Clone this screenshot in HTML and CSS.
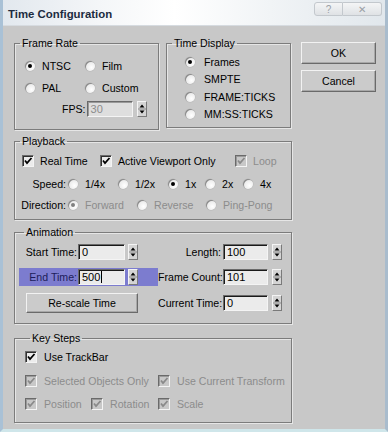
FILE: index.html
```html
<!DOCTYPE html>
<html>
<head>
<meta charset="utf-8">
<link rel="stylesheet" href="styles.css">
</head>
<body>
<div class="window">
  <div class="titlebar">
    <span class="title">Time Configuration</span>
    <div class="caption-btns">
      <span class="cbtn help">?</span>
      <span class="cbtn close">✕</span>
    </div>
  </div>
  <div class="content">
    <div class="toprow">
      <fieldset class="group fr">
        <legend>Frame Rate</legend>
        <div class="fr-grid">
          <span class="opt"><span class="radio on"></span>NTSC</span>
          <span class="opt"><span class="radio"></span>Film</span>
          <span class="opt"><span class="radio"></span>PAL</span>
          <span class="opt"><span class="radio"></span>Custom</span>
        </div>
        <div class="fps-row">
          <span class="lbl">FPS:</span>
          <span class="field disabled w46">30</span>
          <span class="spin"><svg width="8" height="14" viewBox="0 0 8 14"><path d="M4 2.5 L6.5 5.5 L1.5 5.5 Z" fill="#000"/><path d="M0 7 H8" stroke="#8a8a8a" stroke-width="1"/><path d="M1.5 8.5 L6.5 8.5 L4 11.5 Z" fill="#000"/></svg></span>
        </div>
      </fieldset>
      <fieldset class="group td">
        <legend>Time Display</legend>
        <div class="td-list">
          <span class="opt"><span class="radio on"></span>Frames</span>
          <span class="opt"><span class="radio"></span>SMPTE</span>
          <span class="opt"><span class="radio"></span>FRAME:TICKS</span>
          <span class="opt"><span class="radio"></span>MM:SS:TICKS</span>
        </div>
      </fieldset>
      <div class="btn-col">
        <span class="btn dlg">OK</span>
        <span class="btn dlg">Cancel</span>
      </div>
    </div>

    <fieldset class="group wide pb">
      <legend>Playback</legend>
      <div class="row pb-r1">
        <span class="opt c-rt"><span class="check on"><svg width="10" height="10" viewBox="0 0 10 10"><path d="M2 4.5 L4 7 L8.5 2" fill="none" stroke="#000" stroke-width="1.8"/></svg></span>Real Time</span>
        <span class="opt c-av"><span class="check on"><svg width="10" height="10" viewBox="0 0 10 10"><path d="M2 4.5 L4 7 L8.5 2" fill="none" stroke="#000" stroke-width="1.8"/></svg></span>Active Viewport Only</span>
        <span class="opt dis"><span class="check on dis"><svg width="10" height="10" viewBox="0 0 10 10"><path d="M2 4.5 L4 7 L8.5 2" fill="none" stroke="#8a8a8a" stroke-width="1.8"/></svg></span>Loop</span>
      </div>
      <div class="row pb-r2">
        <span class="rlbl">Speed:</span>
        <span class="opt s1"><span class="radio"></span>1/4x</span>
        <span class="opt s1"><span class="radio"></span>1/2x</span>
        <span class="opt s2"><span class="radio on"></span>1x</span>
        <span class="opt s3"><span class="radio"></span>2x</span>
        <span class="opt"><span class="radio"></span>4x</span>
      </div>
      <div class="row pb-r3">
        <span class="rlbl">Direction:</span>
        <span class="opt dis d1"><span class="radio on dis"></span>Forward</span>
        <span class="opt dis d1"><span class="radio"></span>Reverse</span>
        <span class="opt dis"><span class="radio"></span>Ping-Pong</span>
      </div>
    </fieldset>

    <fieldset class="group wide an">
      <legend>Animation</legend>
      <div class="an-grid">
        <div class="cell left">
          <span class="flbl">Start Time:</span>
          <span class="field w47">0</span>
          <span class="spin"><svg width="8" height="14" viewBox="0 0 8 14"><path d="M4 2.5 L6.5 5.5 L1.5 5.5 Z" fill="#000"/><path d="M0 7 H8" stroke="#8a8a8a" stroke-width="1"/><path d="M1.5 8.5 L6.5 8.5 L4 11.5 Z" fill="#000"/></svg></span>
        </div>
        <div class="cell right">
          <span class="flbl">Length:</span>
          <span class="field w45">100</span>
          <span class="spin"><svg width="8" height="14" viewBox="0 0 8 14"><path d="M4 2.5 L6.5 5.5 L1.5 5.5 Z" fill="#000"/><path d="M0 7 H8" stroke="#8a8a8a" stroke-width="1"/><path d="M1.5 8.5 L6.5 8.5 L4 11.5 Z" fill="#000"/></svg></span>
        </div>
        <div class="cell left hl">
          <span class="flbl">End Time:</span>
          <span class="field w47">500<span class="caret"></span></span>
          <span class="spin"><svg width="8" height="14" viewBox="0 0 8 14"><path d="M4 2.5 L6.5 5.5 L1.5 5.5 Z" fill="#000"/><path d="M0 7 H8" stroke="#8a8a8a" stroke-width="1"/><path d="M1.5 8.5 L6.5 8.5 L4 11.5 Z" fill="#000"/></svg></span>
        </div>
        <div class="cell right">
          <span class="flbl">Frame Count:</span>
          <span class="field w45">101</span>
          <span class="spin"><svg width="8" height="14" viewBox="0 0 8 14"><path d="M4 2.5 L6.5 5.5 L1.5 5.5 Z" fill="#000"/><path d="M0 7 H8" stroke="#8a8a8a" stroke-width="1"/><path d="M1.5 8.5 L6.5 8.5 L4 11.5 Z" fill="#000"/></svg></span>
        </div>
        <div class="cell left">
          <span class="btn rescale">Re-scale Time</span>
        </div>
        <div class="cell right">
          <span class="flbl">Current Time:</span>
          <span class="field w45">0</span>
          <span class="spin"><svg width="8" height="14" viewBox="0 0 8 14"><path d="M4 2.5 L6.5 5.5 L1.5 5.5 Z" fill="#000"/><path d="M0 7 H8" stroke="#8a8a8a" stroke-width="1"/><path d="M1.5 8.5 L6.5 8.5 L4 11.5 Z" fill="#000"/></svg></span>
        </div>
      </div>
    </fieldset>

    <fieldset class="group wide ks">
      <legend>Key Steps</legend>
      <div class="row ks-r1">
        <span class="opt"><span class="check on"><svg width="10" height="10" viewBox="0 0 10 10"><path d="M2 4.5 L4 7 L8.5 2" fill="none" stroke="#000" stroke-width="1.8"/></svg></span>Use TrackBar</span>
      </div>
      <div class="row ks-r2">
        <span class="opt dis k1"><span class="check on dis"><svg width="10" height="10" viewBox="0 0 10 10"><path d="M2 4.5 L4 7 L8.5 2" fill="none" stroke="#8a8a8a" stroke-width="1.8"/></svg></span>Selected Objects Only</span>
        <span class="opt dis"><span class="check on dis"><svg width="10" height="10" viewBox="0 0 10 10"><path d="M2 4.5 L4 7 L8.5 2" fill="none" stroke="#8a8a8a" stroke-width="1.8"/></svg></span>Use Current Transform</span>
      </div>
      <div class="row ks-r3">
        <span class="opt dis k2"><span class="check on dis"><svg width="10" height="10" viewBox="0 0 10 10"><path d="M2 4.5 L4 7 L8.5 2" fill="none" stroke="#8a8a8a" stroke-width="1.8"/></svg></span>Position</span>
        <span class="opt dis k3"><span class="check on dis"><svg width="10" height="10" viewBox="0 0 10 10"><path d="M2 4.5 L4 7 L8.5 2" fill="none" stroke="#8a8a8a" stroke-width="1.8"/></svg></span>Rotation</span>
        <span class="opt dis"><span class="check on dis"><svg width="10" height="10" viewBox="0 0 10 10"><path d="M2 4.5 L4 7 L8.5 2" fill="none" stroke="#8a8a8a" stroke-width="1.8"/></svg></span>Scale</span>
      </div>
    </fieldset>
  </div>
</div>
</body>
</html>
```

FILE: styles.css
```css
* { box-sizing: border-box; }
html, body { margin: 0; padding: 0; background: #c8c8c8; }
body {
  font-family: "Liberation Sans", Arial, sans-serif;
  font-size: 10.6px;
  color: #000;
}
.window {
  width: 388px;
  height: 432px;
  background: #c8c8c8;
  border-left: 3px solid #a9c1d6;
  border-right: 3px solid #a9bccd;
  border-bottom: 3px solid #cfe6ea;
  overflow: hidden;
}
.titlebar {
  height: 26px;
  display: flex;
  align-items: flex-start;
  justify-content: space-between;
  background: linear-gradient(90deg, #e2e8ee 0%, #f4f6f8 25%, #ffffff 45%, #f1f4f6 70%, #e1e7ec 100%);
  border-bottom: 1px solid #d6dbe0;
}
.title {
  font-weight: bold;
  font-size: 11.4px;
  color: #1c2b3f;
  margin: 8px 0 0 5px;
}
.caption-btns {
  display: flex;
  margin: 2px 3px 0 0;
}
.cbtn {
  height: 14px;
  border: 1px solid #c3c8cd;
  background: linear-gradient(#f4f5f6, #dfe2e5);
  color: #9aa0a6;
  display: flex;
  align-items: center;
  justify-content: center;
  font-size: 10px;
}
.cbtn.help { width: 29px; border-radius: 3px 0 0 3px; }
.cbtn.close { width: 39px; border-left: none; border-radius: 0 3px 3px 0; }

.content {
  padding: 11px 0 0 11px;
}
.toprow {
  display: flex;
  align-items: flex-start;
}
.group {
  margin: 0;
  border: 1px solid #7c7c7c;
  box-shadow: 1px 1px 0 #e6e6e6, inset 1px 1px 0 #e6e6e6;
  padding: 0;
  min-width: 0;
}
.group legend {
  margin-left: 5px;
  padding: 0 2px;
  line-height: 13px;
}
.fr { width: 145px; padding: 5px 0 10px 0; }
.td { width: 125px; margin-left: 7px; padding: 3px 0 4px 0; }
.btn-col {
  margin-left: 10px;
  margin-top: 5px;
  display: flex;
  flex-direction: column;
  gap: 6px;
}
.btn {
  display: flex;
  align-items: center;
  justify-content: center;
  white-space: nowrap;
  background: #cbcbcb;
  border: 1px solid;
  border-color: #f2f2f2 #6a6a6a #6a6a6a #f2f2f2;
  box-shadow: inset -1px -1px 0 #a8a8a8;
}
.btn.dlg { width: 75px; height: 22px; }

.opt { display: flex; align-items: center; white-space: nowrap; }
.radio {
  width: 10px;
  height: 10px;
  border-radius: 50%;
  flex: none;
  background: radial-gradient(circle at 65% 65%, #ffffff 0%, #ececec 55%, #cfcfcf 100%);
  box-shadow: inset 1px 1px 0 #8a8a8a, 0 0 0 0.5px #b8b8b8;
  display: inline-flex;
  align-items: center;
  justify-content: center;
}
.radio.on::after {
  content: "";
  width: 4px;
  height: 4px;
  border-radius: 50%;
  background: #000;
}
.radio.on.dis::after { background: #808080; }

.check {
  width: 12px;
  height: 12px;
  flex: none;
  background: #ececec;
  border: 1px solid;
  border-color: #6a6a6a #f4f4f4 #f4f4f4 #6a6a6a;
  box-shadow: inset 1px 1px 0 #303030;
  display: inline-flex;
  align-items: center;
  justify-content: center;
}
.check.dis { background: #c8c8c8; box-shadow: inset 1px 1px 0 #9a9a9a; }
.dis { color: #8c8c8c; }

.fr-grid {
  display: grid;
  grid-template-columns: 60px auto;
  grid-auto-rows: 22px;
  padding-left: 10px;
}
.fr-grid .radio { margin-right: 7px; }
.fps-row {
  height: 20px;
  display: flex;
  align-items: center;
  padding-left: 47px;
}
.fps-row .lbl { margin-right: 1px; }
.field {
  height: 16px;
  display: flex;
  align-items: center;
  background: #ebebeb;
  border: 1px solid;
  border-color: #6a6a6a #f4f4f4 #f4f4f4 #6a6a6a;
  box-shadow: inset 1px 1px 0 #1a1a1a;
  padding: 0 0 0 3px;
  font-size: 11px;
  flex: none;
}
.field.disabled { color: #8c8c8c; box-shadow: inset 1px 1px 0 #9a9a9a; background: #dedede; }
.caret { width: 1px; height: 12px; background: #000; margin-left: 1px; }
.w46 { width: 46px; }
.w47 { width: 47px; }
.w45 { width: 45px; }
.spin {
  width: 10px;
  height: 16px;
  margin-left: 4px;
  flex: none;
  background: #d4d4d4;
  border: 1px solid;
  border-color: #f4f4f4 #7a7a7a #7a7a7a #f4f4f4;
  display: flex;
  align-items: center;
  justify-content: center;
  overflow: hidden;
}
.spin svg { flex: none; }

.td-list {
  display: grid;
  grid-auto-rows: 17.5px;
  padding-left: 18px;
}
.td-list .radio { margin-right: 9px; }

.wide { width: 278px; }
.row { display: flex; align-items: center; height: 16px; }
.pb { margin-top: 5px; padding: 5px 0 6px 0; }
.pb-r1 { padding-left: 7px; }
.pb-r1 .check { margin-right: 6px; }
.c-rt { width: 78px; }
.c-av { width: 135px; }
.pb-r2 { margin-top: 7px; }
.pb-r3 { margin-top: 5px; }
.rlbl { width: 53px; text-align: right; padding-right: 2px; flex: none; white-space: nowrap; }
.pb-r2 .radio, .pb-r3 .radio { margin-right: 7px; }
.s1 { width: 50px; }
.s2 { width: 37px; }
.s3 { width: 38px; }
.d1 { width: 69px; }

.an { margin-top: 6px; padding: 4px 0 10px 4px; }
.an-grid {
  display: grid;
  grid-template-columns: 139px 132px;
  grid-template-rows: 18px 18px 20px;
  row-gap: 7px;
}
.cell { display: flex; align-items: center; }
.cell.left .flbl { width: 58px; }
.cell.right .flbl { width: 63px; margin-right: 2px; }
.flbl { text-align: right; flex: none; white-space: nowrap; }
.cell.left .field { margin-left: 1px; }
.cell.left .spin { margin-left: 3px; }
.cell.hl { background: #7c7ccf; }
.cell.hl .flbl { color: #1c1c5a; }
.btn.rescale { width: 112px; height: 20px; margin-left: 7px; }

.ks { margin-top: 8px; padding: 4px 0 10px 10px; }
.ks .check { margin-right: 7px; }
.ks-r2 { margin-top: 8px; }
.ks-r3 { margin-top: 7px; }
.k1 { width: 133px; }
.k2 { width: 66px; }
.k3 { width: 67px; }
```
